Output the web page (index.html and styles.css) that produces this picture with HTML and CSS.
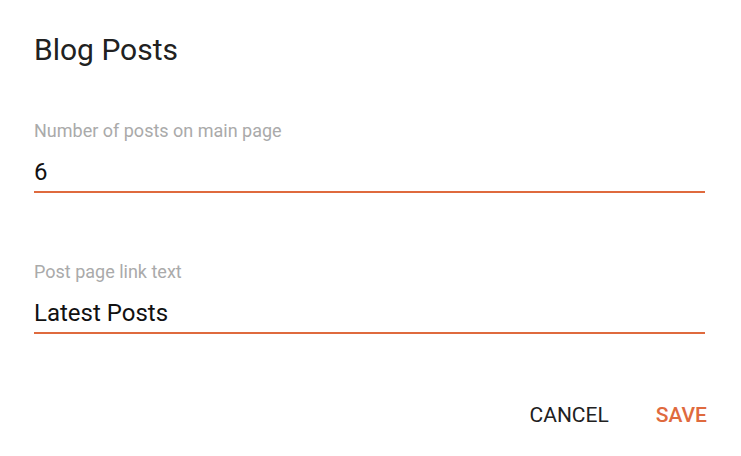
FILE: index.html
```html
<!DOCTYPE html>
<html>
<head>
<meta charset="utf-8">
<link rel="stylesheet" href="styles.css">
</head>
<body>
<div class="dialog">
  <h1 class="title">Blog Posts</h1>
  <div class="field">
    <label class="label">Number of posts on main page</label>
    <div class="value">6</div>
  </div>
  <div class="field">
    <label class="label">Post page link text</label>
    <div class="value">Latest Posts</div>
  </div>
  <div class="actions">
    <button class="btn">CANCEL</button>
    <button class="btn primary">SAVE</button>
  </div>
</div>
</body>
</html>
```
FILE: styles.css
```css
html, body {
  margin: 0;
  padding: 0;
  background: #fff;
}
body {
  font-family: Roboto, "Liberation Sans", sans-serif;
  color: #212121;
}
.dialog {
  padding: 30px 34px 0 34px;
  width: 671px;
}
.title {
  margin: 0;
  font-size: 30px;
  font-weight: 400;
  line-height: 40px;
  color: #212121;
}
.field {
  margin-top: 49px;
  display: flex;
  flex-direction: column;
}
.field + .field {
  margin-top: 67px;
}
.label {
  font-size: 18px;
  color: #aaaaaa;
  line-height: 24px;
}
.value {
  margin-top: 14px;
  font-size: 24px;
  line-height: 30px;
  color: #111;
  border-bottom: 2px solid #df6a3e;
  padding-bottom: 4px;
}
.actions {
  display: flex;
  justify-content: flex-end;
  gap: 47px;
  margin-top: 69px;
  margin-right: -2px;
}
.btn {
  background: none;
  border: none;
  padding: 0;
  font-family: Roboto, "Liberation Sans", sans-serif;
  font-size: 21px;
  font-weight: 400;
  color: #212121;
  line-height: 24px;
}
.btn.primary {
  color: #df6a3e;
  font-weight: 500;
}
```
